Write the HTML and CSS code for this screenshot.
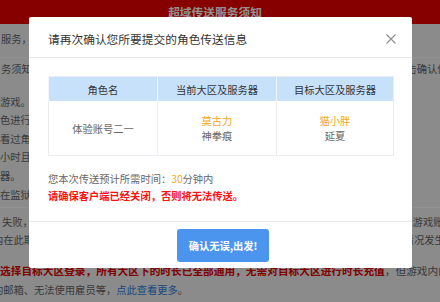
FILE: index.html
```html
<!DOCTYPE html>
<html lang="zh-CN">
<head>
  <meta charset="UTF-8">
  <title>超域传送服务须知</title>
  <link rel="stylesheet" href="styles.css">
</head>
<body>

  <div class="page">
    <header class="topbar">超域传送服务须知</header>

    <section class="block block-first">
      <div class="line indent-1">服务，请在提交申请前仔细阅读以下说明。</div>
    </section>

    <section class="block block-rules">
      <div class="line indent-1">务须知》，并在确认所选的角色信息、当前大区及服务器、目标大区及服务器均无误后，点击确认传送。</div>
      <div class="para">
        <div class="line">游戏。</div>
        <div class="line">色进行传送，传送完成后角色将出现在目标服务器。</div>
        <div class="line">看过角色的相关信息，确认无误后再进行操作。</div>
        <div class="line">小时且角色等级达到要求后方可申请。</div>
        <div class="line">器。</div>
        <div class="line">在监狱中的角色无法进行传送。</div>
      </div>
    </section>

    <section class="block block-notes">
      <div class="line indent-2">失败，系统将会自动退还本次传送所需的全部费用，请在确认无误后重新提交申请，请勿在游戏账号内进行交易。</div>
      <div class="line indent-back">内在此期间，若角色的数据异常、传送失败或其他无法预料的问题，请速联系客服处理避免情况发生。</div>
      <div class="line line-strong"><strong>选择目标大区登录，所有大区下的时长已全部通用，无需对目标大区进行时长充值</strong>，但游戏内的部分功能仍会受到限制</div>
      <div class="line indent-back">的邮箱、无法使用雇员等，<a href="#" class="more">点此查看更多</a>。</div>
    </section>
  </div>

  <div class="mask"></div>

  <div class="dialog">
    <div class="dialog-head">
      <h3>请再次确认您所要提交的角色传送信息</h3>
      <span class="close">
        <svg width="10" height="10" viewBox="0 0 10 10">
          <path d="M0.5 0.5 L9.5 9.5 M9.5 0.5 L0.5 9.5" stroke="#8e8e8e" stroke-width="1.1" fill="none"/>
        </svg>
      </span>
    </div>

    <div class="dialog-body">
      <table class="info">
        <colgroup>
          <col class="col-name">
          <col class="col-from">
          <col>
        </colgroup>
        <thead>
          <tr>
            <th>角色名</th>
            <th>当前大区及服务器</th>
            <th>目标大区及服务器</th>
          </tr>
        </thead>
        <tbody>
          <tr>
            <td>体验账号二一</td>
            <td><span class="zone">莫古力</span><br>神拳痕</td>
            <td><span class="zone">猫小胖</span><br>延夏</td>
          </tr>
        </tbody>
      </table>

      <p class="tip">您本次传送预计所需时间：<span class="num">30</span>分钟内</p>
      <p class="tip warn">请确保客户端已经关闭，否则将无法传送。</p>
    </div>

    <div class="dialog-foot">
      <button type="button">确认无误,出发!</button>
    </div>
  </div>

</body>
</html>
```

FILE: styles.css
```css
body {
  margin: 0;
  width: 440px;
  height: 302px;
  overflow: hidden;
  font-family: "Noto Sans CJK SC", sans-serif;
  background: #f4f4f4;
}

.topbar {
  height: 24px;
  line-height: 24px;
  padding-right: 10px;
  background: #ee0000;
  color: #fff;
  font-size: 11.73px;
  font-weight: bold;
  text-align: center;
}

.block {
  font-size: 10.27px;
  line-height: 18.6px;
  color: #666;
}

.block-first {
  padding: 6px 0 8px;
}

.block-rules {
  border-top: 1px solid #fff;
  padding: 2px 0 3px;
}

.block-rules .para {
  margin-top: 14.4px;
}

.block-notes {
  border-top: 1px solid #fff;
  padding-top: 4.5px;
}

.line {
  white-space: nowrap;
}

.indent-1 {
  text-indent: 1px;
}

.indent-2 {
  text-indent: 2px;
}

.indent-back {
  text-indent: -7px;
}

.line-strong {
  margin-top: 12.6px;
  font-size: 10.7px;
}

.line-strong strong {
  color: #e00000;
}

.more {
  color: #2f80e0;
  text-decoration: none;
}

.mask {
  position: fixed;
  top: 0;
  left: 0;
  right: 0;
  bottom: 0;
  background: rgba(0, 0, 0, 0.43);
}

.dialog {
  position: fixed;
  top: 17px;
  left: 29px;
  width: 383px;
  background: #fff;
  border-radius: 2px;
  color: #333;
}

.dialog-head {
  box-sizing: border-box;
  height: 41px;
  padding: 3px 16px 0 19px;
  display: flex;
  align-items: center;
  justify-content: space-between;
  border-bottom: 1px solid #e8e8e8;
}

.dialog-head h3 {
  margin: 0;
  font-size: 11.73px;
  font-weight: normal;
  color: #333;
}

.close {
  display: flex;
}

.dialog-body {
  padding: 18px 18px 17px 19px;
}

.info {
  width: 100%;
  table-layout: fixed;
  border-collapse: collapse;
  border: 1px solid #e9edf2;
  font-size: 10.27px;
  text-align: center;
}

.col-name {
  width: 109px;
}

.col-from {
  width: 119px;
}

.info th {
  height: 24px;
  padding: 0;
  background: #c8e1fb;
  font-weight: normal;
  color: #333;
  border-left: 1px solid #eef5fd;
}

.info td {
  height: 54px;
  padding: 0;
  line-height: 15px;
  color: #666;
  border-left: 1px solid #ececec;
}

.zone,
.num {
  color: #f5a623;
}

.tip {
  margin: 0;
  font-size: 10.27px;
  line-height: 17px;
  color: #666;
}

.tip:first-of-type {
  margin-top: 14px;
}

.warn {
  color: #ff1010;
  font-weight: bold;
}

.dialog-foot {
  border-top: 1px solid #e8e8e8;
  padding: 7px 0 6px;
  display: flex;
  justify-content: center;
}

.dialog-foot button {
  height: 33px;
  width: 92px;
  margin-left: 5px;
  padding: 0;
  border: none;
  border-radius: 3px;
  background: #4c95ef;
  color: #fff;
  font-family: "Noto Sans CJK SC", sans-serif;
  font-size: 10.27px;
  font-weight: bold;
}
```
